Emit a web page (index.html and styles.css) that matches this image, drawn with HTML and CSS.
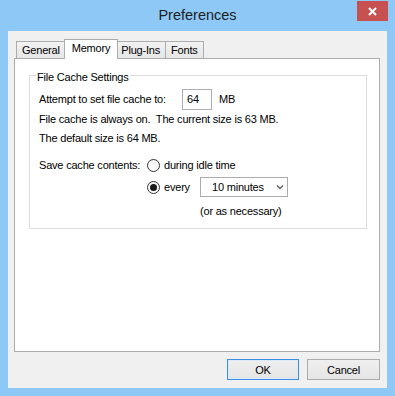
FILE: index.html
```html
<!DOCTYPE html>
<html>
<head>
<meta charset="utf-8">
<link rel="stylesheet" href="styles.css">
</head>
<body>
<div class="window">
  <div class="titlebar">
    <span class="title">Preferences</span>
    <div class="close">
      <svg width="9" height="9" viewBox="0 0 9 9"><path d="M1 1 L8 8 M8 1 L1 8" stroke="#fff" stroke-width="2" fill="none"/></svg>
    </div>
  </div>
  <div class="client">
    <div class="tabs">
      <div class="tab">General</div>
      <div class="tab active">Memory</div>
      <div class="tab">Plug-Ins</div>
      <div class="tab">Fonts</div>
    </div>
    <div class="panel">
      <fieldset class="group">
        <legend>File Cache Settings</legend>
        <div class="row row-input">
          <span class="field-label">Attempt to set file cache to:</span>
          <span class="input">64</span>
          <span class="unit">MB</span>
        </div>
        <div class="row">File cache is always on.&nbsp; The current size is 63 MB.</div>
        <div class="row">The default size is 64 MB.</div>
        <div class="save">
          <span class="save-label">Save cache contents:</span>
          <span class="opt opt-idle"><span class="radio"></span>during idle time</span>
          <span class="opt opt-every"><span class="radio on"></span>every</span>
          <span class="select"><span>10 minutes</span>
            <svg width="8" height="6" viewBox="0 0 8 6"><path d="M1 1.5 L4 4.5 L7 1.5" stroke="#606060" stroke-width="1.4" fill="none"/></svg>
          </span>
          <span class="note">(or as necessary)</span>
        </div>
      </fieldset>
    </div>
    <div class="buttons">
      <button class="btn btn-default">OK</button>
      <button class="btn btn-cancel">Cancel</button>
    </div>
  </div>
</div>
</body>
</html>
```
FILE: styles.css
```css
* { box-sizing: border-box; }
html, body { margin: 0; padding: 0; }
body {
  width: 395px;
  height: 396px;
  overflow: hidden;
  font-family: "Liberation Sans", Arial, sans-serif;
  font-size: 11px;
  letter-spacing: -0.2px;
  color: #000;
}
.window {
  height: 396px;
  background: #8dc8f7;
  display: flex;
  flex-direction: column;
}
.titlebar {
  height: 31px;
  display: grid;
  grid-template-columns: 1fr auto 1fr;
  align-items: start;
}
.title {
  grid-column: 2;
  font-size: 14.5px;
  letter-spacing: 0;
  line-height: 30px;
  color: #1e1e1e;
}
.close {
  grid-column: 3;
  justify-self: end;
  margin: 1px 7px 0 0;
  width: 31px;
  height: 20px;
  background: #c75050;
  display: flex;
  align-items: center;
  justify-content: center;
}
.client {
  flex: 1;
  margin: 0 8px 8px;
  background: #f0f0f0;
  display: flex;
  flex-direction: column;
  padding: 8px 7px 8px 6px;
}
.tabs {
  display: flex;
  align-items: flex-end;
  height: 19px;
  padding-left: 2px;
  position: relative;
  z-index: 1;
}
.tab {
  height: 17px;
  border: 1px solid #acacac;
  border-bottom: none;
  padding: 1px 5px 0;
  line-height: 15px;
  background: linear-gradient(#f2f2f2, #e6e6e6);
}
.tab + .tab { margin-left: -1px; }
.tab.active {
  height: 20px;
  margin: 0 -2px -1px -2px;
  padding: 0 7px;
  line-height: 17px;
  background: #fff;
  position: relative;
  z-index: 1;
}
.panel {
  flex: 1;
  background: #fff;
  border: 1px solid #acacac;
  padding: 7px 12px 0 14px;
}
.group {
  margin: 0;
  border: 1px solid #dcdcdc;
  padding: 5px 9px 7px;
  min-width: 0;
}
.group legend {
  padding: 4px 1px 0;
  margin-left: -3px;
  line-height: 14px;
}
.row { line-height: 19px; }
.row-input {
  display: flex;
  align-items: center;
  height: 21px;
}
.field-label { width: 143px; }
.input {
  width: 30px;
  height: 21px;
  border: 1px solid #abadb3;
  background: #fff;
  padding-left: 4px;
  line-height: 19px;
}
.unit { margin-left: 7px; }
.save {
  display: grid;
  grid-template-columns: 108px 53px auto;
  grid-template-rows: 19px 20px 22px;
  row-gap: 2px;
  margin-top: 8px;
  line-height: 19px;
}
.save-label { grid-column: 1; grid-row: 1; }
.opt {
  display: flex;
  align-items: center;
  gap: 4px;
}
.opt-idle { grid-column: 2 / 4; grid-row: 1; }
.opt-every { grid-column: 2; grid-row: 2; }
.radio {
  width: 13px;
  height: 13px;
  border: 1px solid #333;
  border-radius: 50%;
  background: linear-gradient(#f4f4f4, #ffffff);
  display: flex;
  align-items: center;
  justify-content: center;
  flex: none;
}
.radio.on::after {
  content: "";
  width: 7px;
  height: 7px;
  border-radius: 50%;
  background: #1a1a1a;
}
.select {
  grid-column: 3;
  grid-row: 2;
  width: 88px;
  height: 20px;
  border: 1px solid #acacac;
  background: #fff;
  display: flex;
  align-items: center;
  justify-content: space-between;
  padding: 0 3px 0 11px;
}
.note {
  grid-column: 3;
  grid-row: 3;
  align-self: end;
}
.buttons {
  display: flex;
  justify-content: flex-end;
  gap: 8px;
  margin-top: 7px;
}
.btn {
  height: 21px;
  width: 72px;
  font-family: inherit;
  font-size: 11px;
  letter-spacing: -0.2px;
  color: #000;
  background: linear-gradient(#efefef, #e5e5e5);
  border: 1px solid #acacac;
  padding: 0;
  margin: 0;
}
.btn-cancel { width: 73px; }
.btn-default {
  border-color: #3c8fe2;
  box-shadow: inset 0 0 0 1px #dbeaf9;
}
```
